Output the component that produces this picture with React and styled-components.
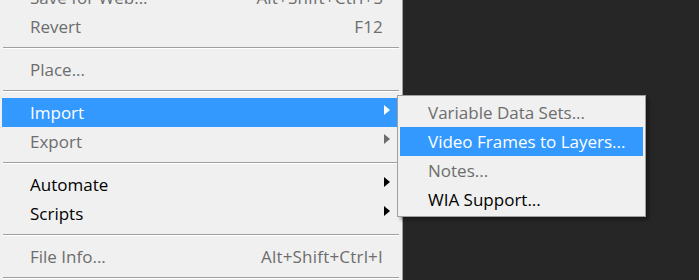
import React from "react";
import styled, { createGlobalStyle } from "styled-components";

const GlobalStyle = createGlobalStyle`
  html, body {
    margin: 0;
    padding: 0;
    background: #262626;
    overflow: hidden;
  }
  body {
    font-family: "Open Sans", "Noto Sans", sans-serif;
  }
`;

const Page = styled.div`
  width: 699px;
  height: 280px;
  overflow: hidden;
  display: flex;
  align-items: flex-start;
  background: #262626;
`;

const Menu = styled.div`
  width: 403px;
  box-sizing: border-box;
  margin-top: -17px;
  background: #f0f0f0;
  border-right: 1px solid #a0a0a0;
  padding-bottom: 30px;
`;

const Item = styled.div`
  position: relative;
  display: flex;
  align-items: flex-start;
  height: 29px;
  margin: 0 5px 0 2px;
  padding: 1px 14px 0 28px;
  box-sizing: border-box;
  font-size: 17px;
  line-height: 28px;
  white-space: nowrap;
  background: ${({ $active }) => ($active ? "#3399ff" : "transparent")};
  color: ${({ $active, $disabled }) =>
    $active ? "#ffffff" : $disabled ? "#6d6d6d" : "#000000"};
`;

const Label = styled.span`
  flex: 1;
`;

const Shortcut = styled.span`
  letter-spacing: 0.2px;
`;

const Arrow = styled.span`
  width: 0;
  height: 0;
  margin: 6px -7px 0 0;
  border-top: 5px solid transparent;
  border-bottom: 5px solid transparent;
  border-left: 6px solid
    ${({ $active, $disabled }) =>
      $active ? "#ffffff" : $disabled ? "#6d6d6d" : "#000000"};
`;

const Separator = styled.div`
  height: 0;
  margin: 6px 3px 6px 3px;
  border-top: 1px solid #a0a0a0;
  border-bottom: 1px solid #ffffff;
`;

const Submenu = styled.div`
  position: absolute;
  top: -3px;
  left: 395px;
  width: 249px;
  box-sizing: border-box;
  padding: 2px;
  background: #f0f0f0;
  border: 1px solid #a0a0a0;
  box-shadow: 3px 3px 3px rgba(0, 0, 0, 0.35);
  z-index: 5;
`;

const SubItem = styled.div`
  height: 29px;
  padding: 1px 10px 0 28px;
  box-sizing: border-box;
  font-size: 17px;
  line-height: 28px;
  white-space: nowrap;
  background: ${({ $active }) => ($active ? "#3399ff" : "transparent")};
  color: ${({ $active, $disabled }) =>
    $active ? "#ffffff" : $disabled ? "#6d6d6d" : "#000000"};
`;

const importItems = [
  { label: "Variable Data Sets...", disabled: true },
  { label: "Video Frames to Layers...", active: true },
  { label: "Notes...", disabled: true },
  { label: "WIA Support..." },
];

const App = () => {
  return (
    <>
      <GlobalStyle />
      <Page>
        <Menu>
          <Item $disabled>
            <Label>Save for Web...</Label>
            <Shortcut>Alt+Shift+Ctrl+S</Shortcut>
          </Item>
          <Item $disabled>
            <Label>Revert</Label>
            <Shortcut>F12</Shortcut>
          </Item>
          <Separator />
          <Item $disabled>
            <Label>Place...</Label>
          </Item>
          <Separator />
          <Item $active>
            <Label>Import</Label>
            <Arrow $active />
            <Submenu>
              {importItems.map((it) => (
                <SubItem key={it.label} $active={it.active} $disabled={it.disabled}>
                  {it.label}
                </SubItem>
              ))}
            </Submenu>
          </Item>
          <Item $disabled>
            <Label>Export</Label>
            <Arrow $disabled />
          </Item>
          <Separator />
          <Item>
            <Label>Automate</Label>
            <Arrow />
          </Item>
          <Item>
            <Label>Scripts</Label>
            <Arrow />
          </Item>
          <Separator />
          <Item $disabled>
            <Label>File Info...</Label>
            <Shortcut>Alt+Shift+Ctrl+I</Shortcut>
          </Item>
          <Separator />
        </Menu>
      </Page>
    </>
  );
};

export default App;
